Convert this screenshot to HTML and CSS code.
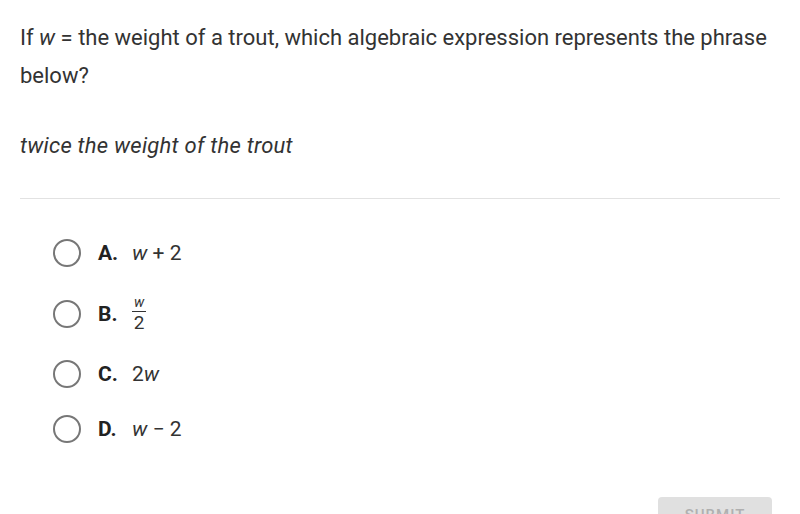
FILE: index.html
```html
<!DOCTYPE html>
<html lang="en">
<head>
    <meta charset="UTF-8">
    <title>Question</title>
    <link rel="stylesheet" href="styles.css">
</head>
<body>
<div class="page">
    <p class="question">If <i class="var">w</i> = the weight of a trout, which algebraic expression represents the phrase below?</p>
    <p class="phrase">twice the weight of the trout</p>
    <hr class="divider">

    <!-- ANSWERS -->
    <div class="options">
        <label class="option"><span class="radio"></span><b class="letter">A.</b><span class="value"><i class="var">w</i> + 2</span></label>
        <label class="option tall"><span class="radio"></span><b class="letter">B.</b>
            <span class="value frac"><span class="num"><i class="var">w</i></span><span class="den">2</span></span></label>
        <label class="option"><span class="radio"></span><b class="letter">C.</b><span class="value">2<i class="var">w</i></span></label>
        <label class="option"><span class="radio"></span><b class="letter">D.</b><span class="value"><i class="var">w</i> &minus; 2</span></label>
    </div>

    <div class="actions">
        <button class="submit">SUBMIT</button>
    </div>
</div>
</body>
</html>
```

FILE: styles.css
```css
html {
    box-sizing: border-box;
    background: #fff;
}

*, *:before, *:after {
    box-sizing: inherit;
}

body {
    margin: 0;
    font-family: Roboto, 'Noto Sans', sans-serif;
    color: #333;
    overflow: hidden;
}

.page {
    padding: 19px 20px 0;
}

.question {
    margin: 0;
    font-size: 22px;
    line-height: 38px;
}

.var {
    font-style: italic;
}

.phrase {
    margin: 32px 0 0;
    font-size: 22px;
    line-height: 38px;
    font-style: italic;
    letter-spacing: 0.25px;
}

.divider {
    border: 0;
    border-top: 1px solid #e2e2e2;
    margin: 33px 0 0;
}

.options {
    display: flex;
    flex-direction: column;
    gap: 27px;
    margin-top: 40px;
    padding-left: 33px;
}

.option {
    display: flex;
    align-items: center;
    height: 28px;
    font-size: 21px;
}

.option.tall {
    height: 39px;
}

.radio {
    width: 28px;
    height: 28px;
    border: 2.5px solid #777;
    border-radius: 50%;
    margin-right: 17px;
    flex-shrink: 0;
}

.letter {
    font-weight: bold;
    width: 34px;
    color: #222;
}

.frac {
    display: inline-flex;
    flex-direction: column;
    align-items: center;
    line-height: 1;
}

.frac .num {
    font-size: 14px;
    padding: 0 2px 2px;
    border-bottom: 1px solid #333;
}

.frac .den {
    font-size: 19px;
    padding-top: 1px;
}

.actions {
    display: flex;
    justify-content: flex-end;
    margin-top: 54px;
    padding-right: 8px;
}

.submit {
    width: 114px;
    height: 36px;
    border: 0;
    border-radius: 4px;
    background: #e0e0e0;
    color: #b0b0b0;
    font-family: Roboto, sans-serif;
    font-size: 15px;
    font-weight: 500;
    letter-spacing: 1px;
}
```
